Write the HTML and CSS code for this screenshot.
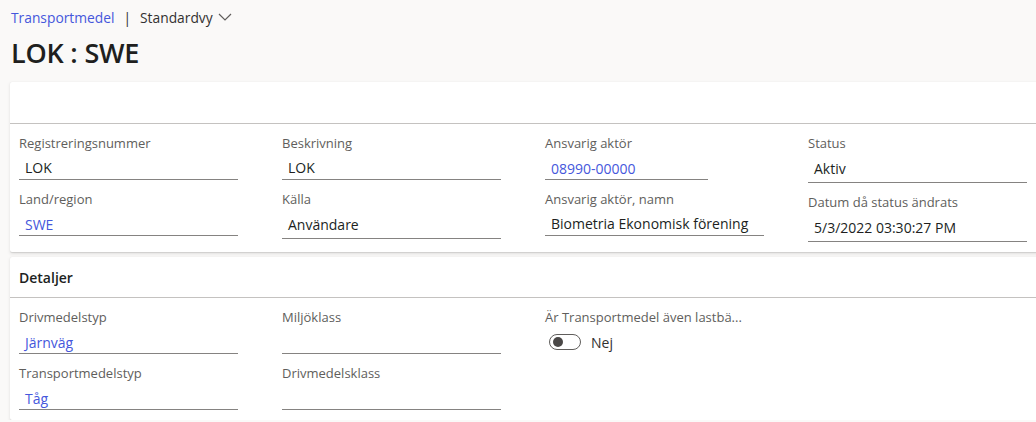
FILE: index.html
```html
<!DOCTYPE html>
<html lang="sv">
<head>
<meta charset="utf-8">
<title>LOK : SWE</title>
<link rel="stylesheet" href="styles.css">
</head>
<body>
<div class="page">
  <nav class="crumbs">
    <a class="crumb-link">Transportmedel</a>
    <span class="crumb-sep">|</span>
    <span class="crumb-view">Standardvy</span>
    <svg class="chev" width="14" height="8" viewBox="0 0 14 8"><path d="M1 1 L7 7 L13 1" fill="none" stroke="#605e5c" stroke-width="1.2"/></svg>
  </nav>
  <h1 class="title">LOK : SWE</h1>

  <section class="card">
    <div class="card-head"></div>
    <div class="grid">
      <div class="col">
        <div class="field"><div class="label">Registreringsnummer</div><div class="input">LOK</div></div>
        <div class="field"><div class="label">Land/region</div><div class="input link">SWE</div></div>
      </div>
      <div class="col">
        <div class="field"><div class="label">Beskrivning</div><div class="input">LOK</div></div>
        <div class="field"><div class="label">Källa</div><div class="input combo">Användare</div></div>
      </div>
      <div class="col">
        <div class="field"><div class="label">Ansvarig aktör</div><div class="input link short">08990-00000</div></div>
        <div class="field"><div class="label">Ansvarig aktör, namn</div><div class="input">Biometria Ekonomisk förening</div></div>
      </div>
      <div class="col">
        <div class="field"><div class="label">Status</div><div class="input combo">Aktiv</div></div>
        <div class="field"><div class="label">Datum då status ändrats</div><div class="input combo">5/3/2022 03:30:27 PM</div></div>
      </div>
    </div>
  </section>

  <section class="card">
    <div class="card-head"><h2 class="card-title">Detaljer</h2></div>
    <div class="grid">
      <div class="col">
        <div class="field"><div class="label">Drivmedelstyp</div><div class="input link">Järnväg</div></div>
        <div class="field"><div class="label">Transportmedelstyp</div><div class="input link">Tåg</div></div>
      </div>
      <div class="col">
        <div class="field"><div class="label">Miljöklass</div><div class="input"></div></div>
        <div class="field"><div class="label">Drivmedelsklass</div><div class="input"></div></div>
      </div>
      <div class="col">
        <div class="field">
          <div class="label">Är Transportmedel även lastbä...</div>
          <div class="toggle-row"><span class="toggle"><span class="knob"></span></span><span class="toggle-text">Nej</span></div>
        </div>
      </div>
      <div class="col"></div>
    </div>
  </section>
</div>
</body>
</html>
```

FILE: styles.css
```css
html, body {
  margin: 0;
  padding: 0;
  background: #faf9f8;
  overflow: hidden;
}
body {
  font-family: "Open Sans", "Noto Sans", sans-serif;
  color: #323130;
}
.page {
  padding-left: 10px;
  margin-right: -10px;
}
.crumbs {
  display: flex;
  align-items: center;
  height: 20px;
  padding-top: 8px;
  padding-left: 1px;
  font-size: 13.8px;
  line-height: 20px;
}
.crumb-link { color: #4557dc; }
.crumb-sep { margin: 0 9px 0 9px; color: #323130; }
.crumb-view { color: #323130; }
.chev { margin-left: 5px; margin-top: -3px; }
.title {
  margin: 7px 0 0 1px;
  font-size: 27px;
  line-height: 36px;
  font-weight: 600;
  color: #201f1e;
  letter-spacing: -0.2px;
}
.card {
  margin-top: 11px;
  background: #fff;
  border-radius: 2px;
  box-shadow: 0 1.6px 3.6px rgba(0,0,0,0.10), 0 0.3px 0.9px rgba(0,0,0,0.09);
}
.card + .card { margin-top: 5px; }
.card-head {
  box-sizing: border-box;
  height: 42px;
  border-bottom: 1px solid #c4c2c0;
  display: flex;
  align-items: center;
  padding-left: 9px;
}
.card + .card .card-head { height: 41px; }
.card-title {
  margin: 0;
  font-size: 14px;
  font-weight: 600;
  color: #201f1e;
}
.grid {
  display: grid;
  grid-template-columns: repeat(4, 219px);
  column-gap: 44px;
  padding: 9px 9px 10px 9px;
}
.col {
  display: flex;
  flex-direction: column;
  gap: 9px;
}
.label {
  font-size: 13px;
  line-height: 20px;
  color: #605e5c;
  white-space: nowrap;
}
.input {
  height: 27px;
  box-sizing: border-box;
  padding: 5px 0 0 6px;
  font-size: 14px;
  line-height: 20px;
  color: #201f1e;
  border-bottom: 1.5px solid #858381;
  white-space: nowrap;
}
.input.combo {
  height: 30px;
  padding-top: 6px;
}
.input.link { color: #4557dc; padding-top: 6px; }
.input.short { width: 163px; }
.toggle-row {
  display: flex;
  align-items: center;
  height: 30px;
  padding-left: 4px;
}
.toggle {
  width: 32px;
  height: 16px;
  box-sizing: border-box;
  border: 1px solid #605e5c;
  border-radius: 8px;
  display: flex;
  align-items: center;
  padding-left: 3px;
}
.knob {
  width: 10px;
  height: 10px;
  border-radius: 50%;
  background: #4a4847;
}
.toggle-text {
  margin-left: 10px;
  font-size: 14px;
  color: #323130;
}
```
